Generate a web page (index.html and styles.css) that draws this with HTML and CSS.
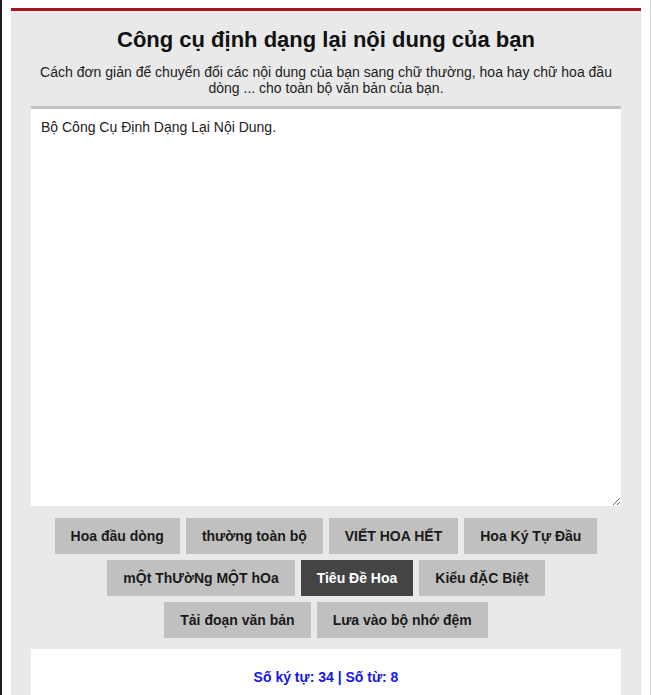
FILE: index.html
```html
<!DOCTYPE html>
<html lang="vi">
<head>
    <meta charset="UTF-8">
    <title>Công cụ định dạng lại nội dung</title>
    <link rel="stylesheet" href="styles.css">
</head>
<body>
    <div class="page">
        <div class="tool-box">
            <h1 class="tool-title">Công cụ định dạng lại nội dung của bạn</h1>
            <p class="tool-desc">Cách đơn giản để chuyển đổi các nội dung của bạn sang chữ thường, hoa hay chữ hoa đầu dòng ... cho toàn bộ văn bản của bạn.</p>

            <textarea class="tool-input">Bộ Công Cụ Định Dạng Lại Nội Dung.</textarea>

            <!-- các nút chuyển đổi -->
            <div class="btn-row">
                <button class="btn">Hoa đầu dòng</button>
                <button class="btn">thường toàn bộ</button>
                <button class="btn">VIẾT HOA HẾT</button>
                <button class="btn">Hoa Ký Tự Đầu</button>
            </div>
            <div class="btn-row">
                <button class="btn">mỘt ThƯờNg MỘT hOa</button>
                <button class="btn active">Tiêu Đề Hoa</button>
                <button class="btn">Kiểu đẶC Biệt</button>
            </div>
            <div class="btn-row">
                <button class="btn">Tải đoạn văn bản</button>
                <button class="btn">Lưa vào bộ nhớ đệm</button>
            </div>

            <div class="stats">Số ký tự: 34 | Số từ: 8</div>
        </div>
    </div>
</body>
</html>
```

FILE: styles.css
```css
html, body {
    margin: 0;
    height: 100%;
    overflow: hidden;
    background: #fff;
    font-family: Arial, "Liberation Sans", sans-serif;
}

.page {
    box-sizing: border-box;
    height: 100%;
    border-left: 2px solid #1c1c1c;
    border-right: 1px solid #d8d8d8;
    padding: 8px 9px 0 9px;
}

/* khung chính màu xám */
.tool-box {
    background: #e9e9e9;
    border-top: 3px solid #a3171f;
    padding: 0 20px;
    height: 100%;
}

.tool-title {
    margin: 0;
    padding-top: 16px;
    font-size: 22px;
    line-height: 26px;
    font-weight: bold;
    color: #111;
    text-align: center;
}

.tool-desc {
    margin: 11px -4px 0;
    font-size: 14px;
    line-height: 16px;
    color: #222;
    text-align: center;
}

.tool-input {
    display: block;
    box-sizing: border-box;
    width: 100%;
    height: 400px;
    margin-top: 10px;
    padding: 9px 10px;
    border: none;
    border-top: 3px solid #c2c2c2;
    background: #fff;
    font-family: Arial, "Liberation Sans", sans-serif;
    font-size: 14px;
    line-height: 18px;
    color: #222;
    outline: none;
}

.btn-row {
    display: flex;
    justify-content: center;
    gap: 6px;
    margin-top: 6px;
}

.btn-row:first-of-type {
    margin-top: 12px;
}

.btn {
    height: 36px;
    padding: 0 16px;
    border: none;
    background: #c0c0c0;
    color: #1a1a1a;
    font-family: Arial, "Liberation Sans", sans-serif;
    font-size: 14px;
    font-weight: bold;
    cursor: pointer;
}

.btn.active {
    background: #444;
    color: #fff;
}

/* ô thống kê */
.stats {
    margin-top: 11px;
    padding: 20px 0 30px;
    background: #fff;
    color: #1414ee;
    font-size: 14px;
    font-weight: bold;
    line-height: 16px;
    text-align: center;
}
```
